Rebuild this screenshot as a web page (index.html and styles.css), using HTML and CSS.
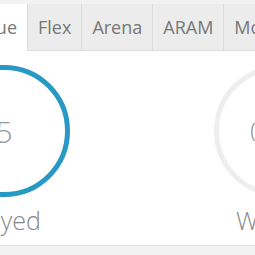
FILE: index.html
```html
<!DOCTYPE html>
<html lang="en">
    <head>
        <meta charset="utf-8">
        <title>Match stats</title>
        <link rel="stylesheet" href="styles.css">
    </head>
    <body>
        <div class="panel">
            <div class="tabs">
                <div class="tab active">Solo Queue</div>
                <div class="tab">Flex</div>
                <div class="tab">Arena</div>
                <div class="tab">ARAM</div>
                <div class="tab">More</div>
            </div>
            <div class="stats">
                <div class="stat">
                    <div class="ring blue">5</div>
                    <div class="label">Played</div>
                </div>
                <div class="stat">
                    <div class="ring small">0.0%</div>
                    <div class="label">Winrate</div>
                </div>
            </div>
        </div>
    </body>
</html>
```

FILE: styles.css
```css
body{
    margin: 0;
    padding-top: 4px;
    background: #f2f2f2;
    font-family: "Open Sans", sans-serif;
    overflow: hidden;
}
.panel{
    background: #fff;
    border-bottom: 1px solid #dedede;
    overflow: hidden;
}
/* tab bar */
.tabs{
    display: flex;
    margin-left: -100px;
    white-space: nowrap;
}
.tab{
    flex: none;
    padding: 0 10px;
    height: 46px;
    line-height: 46px;
    font-size: 18px;
    color: #777;
    background: #ececec;
    border-left: 1px solid #dcdcdc;
    border-bottom: 1px solid #dcdcdc;
}
.tab.active{
    width: 107px;
    text-align: right;
    overflow: hidden;
    background: #fff;
    border-left: none;
    border-bottom-color: #fff;
}
/* stat circles */
.stats{
    display: flex;
    margin-left: -134px;
    padding: 14px 0 8px;
}
.stat{
    flex: none;
    width: 276px;
    display: flex;
    flex-direction: column;
    align-items: center;
}
.ring{
    width: 132px;
    height: 132px;
    box-sizing: border-box;
    border: 5px solid #eee;
    border-radius: 50%;
    display: flex;
    align-items: center;
    justify-content: center;
    font-size: 30px;
    font-weight: 300;
    color: #999;
}
.ring.blue{
    border-color: #2899c4;
}
.ring.small{
    font-size: 28px;
}
.label{
    margin-top: 6px;
    font-size: 25px;
    line-height: 34px;
    font-weight: 300;
    color: #888;
}
```
